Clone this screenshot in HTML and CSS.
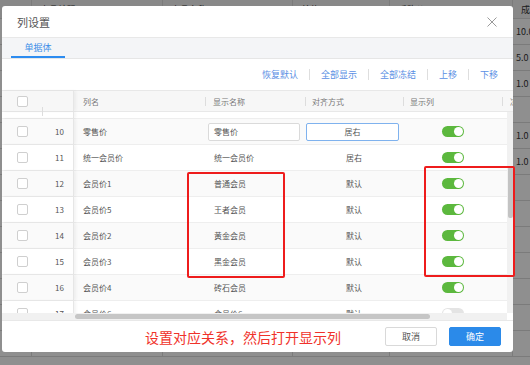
FILE: index.html
```html
<!DOCTYPE html>
<html lang="zh">
<head>
<meta charset="utf-8">
<title>列设置</title>
<link rel="stylesheet" href="styles.css">
</head>
<body>
<div class="bg">
  <div class="bg-row bg-head">
    <div class="bg-cell w32"></div><div class="bg-cell w131">商品编码</div><div class="bg-cell w130">商品名称</div><div class="bg-cell w97">单位</div><div class="bg-cell w123">采购价</div><div class="bg-cell last head-last">成本价</div>
  </div>
  <div class="bg-row"><div class="bg-cell w32"></div><div class="bg-cell w131"></div><div class="bg-cell w130"></div><div class="bg-cell w97"></div><div class="bg-cell w123"></div><div class="bg-cell last">10.0</div></div>
  <div class="bg-row"><div class="bg-cell w32"></div><div class="bg-cell w131"></div><div class="bg-cell w130"></div><div class="bg-cell w97"></div><div class="bg-cell w123"></div><div class="bg-cell last">5.0</div></div>
  <div class="bg-row"><div class="bg-cell w32"></div><div class="bg-cell w131"></div><div class="bg-cell w130"></div><div class="bg-cell w97"></div><div class="bg-cell w123"></div><div class="bg-cell last">1.0</div></div>
  <div class="bg-row"><div class="bg-cell w32"></div><div class="bg-cell w131"></div><div class="bg-cell w130"></div><div class="bg-cell w97"></div><div class="bg-cell w123"></div><div class="bg-cell last"></div></div>
  <div class="bg-row"><div class="bg-cell w32"></div><div class="bg-cell w131"></div><div class="bg-cell w130"></div><div class="bg-cell w97"></div><div class="bg-cell w123"></div><div class="bg-cell last">1.0</div></div>
  <div class="bg-row"><div class="bg-cell w32"></div><div class="bg-cell w131"></div><div class="bg-cell w130"></div><div class="bg-cell w97"></div><div class="bg-cell w123"></div><div class="bg-cell last">1.0</div></div>
  <div class="bg-row"><div class="bg-cell w32"></div><div class="bg-cell w131"></div><div class="bg-cell w130"></div><div class="bg-cell w97"></div><div class="bg-cell w123"></div><div class="bg-cell last"></div></div>
  <div class="bg-row"><div class="bg-cell w32"></div><div class="bg-cell w131"></div><div class="bg-cell w130"></div><div class="bg-cell w97"></div><div class="bg-cell w123"></div><div class="bg-cell last"></div></div>
  <div class="bg-row"><div class="bg-cell w32"></div><div class="bg-cell w131"></div><div class="bg-cell w130"></div><div class="bg-cell w97"></div><div class="bg-cell w123"></div><div class="bg-cell last"></div></div>
  <div class="bg-row"><div class="bg-cell w32"></div><div class="bg-cell w131"></div><div class="bg-cell w130"></div><div class="bg-cell w97"></div><div class="bg-cell w123"></div><div class="bg-cell last"></div></div>
  <div class="bg-row"><div class="bg-cell w32"></div><div class="bg-cell w131"></div><div class="bg-cell w130"></div><div class="bg-cell w97"></div><div class="bg-cell w123"></div><div class="bg-cell last"></div></div>
  <div class="bg-row"><div class="bg-cell w32"></div><div class="bg-cell w131"></div><div class="bg-cell w130"></div><div class="bg-cell w97"></div><div class="bg-cell w123"></div><div class="bg-cell last"></div></div>
  <div class="bg-row"><div class="bg-cell w32"></div><div class="bg-cell w131"></div><div class="bg-cell w130"></div><div class="bg-cell w97"></div><div class="bg-cell w123"></div><div class="bg-cell last"></div></div>
</div>
<div class="mask"></div>

<div class="modal">
  <div class="m-head">
    <div class="m-title">列设置</div>
    <svg class="m-close" width="10" height="10" viewBox="0 0 10 10"><path d="M0.5 0.5L9.5 9.5M9.5 0.5L0.5 9.5" stroke="#9a9a9a" stroke-width="1" fill="none"/></svg>
  </div>
  <div class="tabs"><div class="tab active">单据体</div></div>
  <div class="toolbar">
    <span class="tlink">恢复默认</span><span class="tsep"></span>
    <span class="tlink">全部显示</span><span class="tsep"></span>
    <span class="tlink">全部冻结</span><span class="tsep"></span>
    <span class="tlink">上移</span><span class="tsep"></span>
    <span class="tlink last">下移</span>
  </div>
  <div class="thead">
    <div class="fixed"><div class="c-check"><span class="cbox"></span></div><div class="c-num sep"></div></div>
    <div class="c-name th">列名</div>
    <div class="c-disp th sep">显示名称</div>
    <div class="c-align th sep">对齐方式</div>
    <div class="c-show th sep">显示列</div>
    <div class="c-extra th sep">冻结列</div>
  </div>
  <div class="tbody">
    <div class="rows">
      <div class="spacer"><div class="fixed"></div></div>
      <div class="row alt">
        <div class="fixed"><div class="c-check"><span class="cbox"></span></div><div class="c-num">10</div></div>
        <div class="c-name">零售价</div>
        <div class="c-disp"><div class="input">零售价</div></div>
        <div class="c-align"><div class="select">居右</div></div>
        <div class="c-show"><span class="switch on"></span></div>
      </div>
      <div class="row">
        <div class="fixed"><div class="c-check"><span class="cbox"></span></div><div class="c-num">11</div></div>
        <div class="c-name">统一会员价</div>
        <div class="c-disp">统一会员价</div>
        <div class="c-align">居右</div>
        <div class="c-show"><span class="switch on"></span></div>
      </div>
      <div class="row alt">
        <div class="fixed"><div class="c-check"><span class="cbox"></span></div><div class="c-num">12</div></div>
        <div class="c-name">会员价1</div>
        <div class="c-disp">普通会员</div>
        <div class="c-align">默认</div>
        <div class="c-show"><span class="switch on"></span></div>
      </div>
      <div class="row">
        <div class="fixed"><div class="c-check"><span class="cbox"></span></div><div class="c-num">13</div></div>
        <div class="c-name">会员价5</div>
        <div class="c-disp">王者会员</div>
        <div class="c-align">默认</div>
        <div class="c-show"><span class="switch on"></span></div>
      </div>
      <div class="row alt">
        <div class="fixed"><div class="c-check"><span class="cbox"></span></div><div class="c-num">14</div></div>
        <div class="c-name">会员价2</div>
        <div class="c-disp">黄金会员</div>
        <div class="c-align">默认</div>
        <div class="c-show"><span class="switch on"></span></div>
      </div>
      <div class="row">
        <div class="fixed"><div class="c-check"><span class="cbox"></span></div><div class="c-num">15</div></div>
        <div class="c-name">会员价3</div>
        <div class="c-disp">黑金会员</div>
        <div class="c-align">默认</div>
        <div class="c-show"><span class="switch on"></span></div>
      </div>
      <div class="row alt">
        <div class="fixed"><div class="c-check"><span class="cbox"></span></div><div class="c-num">16</div></div>
        <div class="c-name">会员价4</div>
        <div class="c-disp">砖石会员</div>
        <div class="c-align">默认</div>
        <div class="c-show"><span class="switch on"></span></div>
      </div>
      <div class="row">
        <div class="fixed"><div class="c-check"><span class="cbox"></span></div><div class="c-num">17</div></div>
        <div class="c-name">会员价6</div>
        <div class="c-disp">会员价6</div>
        <div class="c-align">默认</div>
        <div class="c-show"><span class="switch"></span></div>
      </div>
    </div>
    <div class="vscroll"><div class="vthumb"></div></div>
  </div>
  <div class="hscroll"><div class="hthumb"></div></div>
  <div class="m-foot">
    <div class="note">设置对应关系，然后打开显示列</div>
    <div class="btn">取消</div>
    <div class="btn primary">确定</div>
  </div>
</div>

<div class="mark mark-a"></div>
<div class="mark mark-b"></div>
</body>
</html>
```

FILE: styles.css
```css
* { box-sizing: border-box; margin: 0; padding: 0; }
html, body { width: 530px; height: 365px; overflow: hidden; }
body {
  position: relative;
  font-family: "Noto Sans CJK SC", "Noto Sans", sans-serif;
  color: #555;
  background: #fff;
}

/* background page */
.bg { width: 530px; }
.bg-row { display: flex; height: 26px; border-bottom: 1px solid #dcdcdc; font-size: 9px; color: #333; }
.bg-head { height: 19px; background: #f3f3f3; }
.bg-cell {
  flex: none;
  display: flex;
  align-items: center;
  padding-left: 8px;
  border-right: 1px solid #dcdcdc;
  white-space: nowrap;
  overflow: hidden;
}
.w32 { width: 32px; }
.w131 { width: 131px; }
.w130 { width: 130px; }
.w97 { width: 97px; }
.w123 { width: 123px; }
.bg-cell.last { flex: 1; padding-left: 3px; border-right: 0; }
.bg-cell.head-last { padding-left: 8px; }

.mask { position: absolute; inset: 0; background: rgba(0, 0, 0, 0.44); }

/* modal */
.modal {
  position: absolute;
  left: 2px;
  top: 6px;
  width: 511px;
  height: 346px;
  background: #fff;
  border-radius: 3px;
  display: flex;
  flex-direction: column;
  overflow: hidden;
}
.m-head {
  height: 32px;
  flex: none;
  border-bottom: 1px solid #e8e8e8;
  display: flex;
  align-items: center;
  justify-content: space-between;
  padding: 0 16px 0 15px;
}
.m-title { font-size: 11px; color: #555; }
.m-close { display: block; }

.tabs {
  height: 21px;
  flex: none;
  background: #f4f5f7;
  border-bottom: 1px solid #e6e6e6;
  display: flex;
  padding-left: 9px;
}
.tab {
  width: 54px;
  font-size: 9px;
  color: #3d8ee8;
  display: flex;
  align-items: center;
  justify-content: center;
  border-bottom: 2px solid #2d8cf0;
  padding-top: 1px;
}

.toolbar {
  height: 31px;
  flex: none;
  display: flex;
  align-items: center;
  justify-content: flex-end;
  padding-right: 15px;
}
.tlink { font-size: 9px; color: #5b8fe4; padding: 0 11px; }
.tlink.last { padding-right: 0; }
.tsep { width: 1px; height: 11px; background: #dedede; }

/* table */
.thead {
  height: 22px;
  flex: none;
  display: flex;
  background: #f7f7f7;
  border-top: 1px solid #e8e8e8;
  border-bottom: 1px solid #e8e8e8;
  font-size: 8px;
  color: #777;
}
.thead > div, .row > div { display: flex; align-items: center; height: 100%; }
.fixed {
  flex: none;
  width: 72px;
  display: flex;
  border-right: 1px solid #e6e6e6;
  box-shadow: 2px 0 3px rgba(0, 0, 0, 0.05);
  position: relative;
  z-index: 1;
}
.c-check { width: 40px; justify-content: center; display: flex; align-items: center; }
.c-num { width: 31px; justify-content: flex-end; padding-right: 9px; display: flex; align-items: center; font-size: 8px; color: #555; }
.c-name { width: 131px; flex: none; padding-left: 9px; }
.c-disp { width: 100px; flex: none; padding-left: 8px; }
.c-align { width: 98px; flex: none; justify-content: center; }
.c-show { width: 99px; flex: none; justify-content: center; }
.c-extra { flex: 1; padding-left: 8px; overflow: hidden; white-space: nowrap; }
.th.c-align, .th.c-show { justify-content: flex-start; padding-left: 7px; }
.sep { position: relative; }
.sep::before {
  content: "";
  position: absolute;
  left: 0;
  top: 6px;
  width: 1px;
  height: 9px;
  background: #dddddd;
}
.cbox {
  width: 11px;
  height: 11px;
  border: 1px solid #cfcfcf;
  border-radius: 2px;
  background: #fff;
}

.tbody { height: 201px; flex: none; display: flex; }
.rows { flex: 1; overflow: hidden; font-size: 8px; color: #555; }
.spacer { height: 6px; }
.spacer .fixed { height: 6px; }
.row {
  display: flex;
  height: 26px;
  border-top: 1px solid #eeeeee;
  background: #fff;
}
.row.alt { background: #fafafa; }
.row .fixed { height: 100%; background: inherit; }
.row .c-disp { padding-left: 9px; }
.row .c-disp .input { margin-left: -6px; }

.input {
  width: 92px;
  height: 18px;
  border: 1px solid #dadada;
  border-radius: 2px;
  background: #fff;
  padding-left: 5px;
  display: flex;
  align-items: center;
}
.select {
  width: 93px;
  height: 18px;
  border: 1px solid #7fb2ee;
  border-radius: 2px;
  background: #fff;
  display: flex;
  align-items: center;
  justify-content: center;
  margin-left: -3px;
}
.switch {
  position: relative;
  width: 22px;
  height: 11px;
  border-radius: 6px;
  background: #e4e4e4;
}
.switch::after {
  content: "";
  position: absolute;
  left: 1px;
  top: 1px;
  width: 9px;
  height: 9px;
  border-radius: 50%;
  background: #fff;
}
.switch.on { background: #5cb83e; }
.switch.on::after { left: 12px; }

.vscroll { width: 6px; flex: none; background: #f1f1f1; padding: 55px 0 0 1px; }
.vthumb { width: 5px; height: 51px; background: #c3c3c3; border-radius: 2px; }

.hscroll { height: 7px; flex: none; width: 505px; background: #f1f1f1; padding: 1px 0 0 73px; }
.hthumb { width: 355px; height: 5px; background: #c6c6c6; border-radius: 3px; }

.m-foot {
  flex: 1;
  border-top: 1px solid #e8e8e8;
  display: flex;
  align-items: center;
  justify-content: flex-end;
  padding-right: 12px;
}
.note { font-size: 14px; color: #f0322a; margin-right: 44px; }
.btn {
  width: 52px;
  height: 19px;
  border: 1px solid #d9d9d9;
  border-radius: 2px;
  font-size: 9px;
  color: #555;
  display: flex;
  align-items: center;
  justify-content: center;
  background: #fff;
}
.btn.primary { margin-left: 12px; background: #2b8ae9; border-color: #2b8ae9; color: #fff; }

/* annotation marks */
.mark { position: absolute; border: 2px solid #ee1c1c; border-radius: 2px; }
.mark-a { left: 187px; top: 172px; width: 98px; height: 106px; }
.mark-b { left: 424px; top: 166px; width: 91px; height: 111px; }
```
